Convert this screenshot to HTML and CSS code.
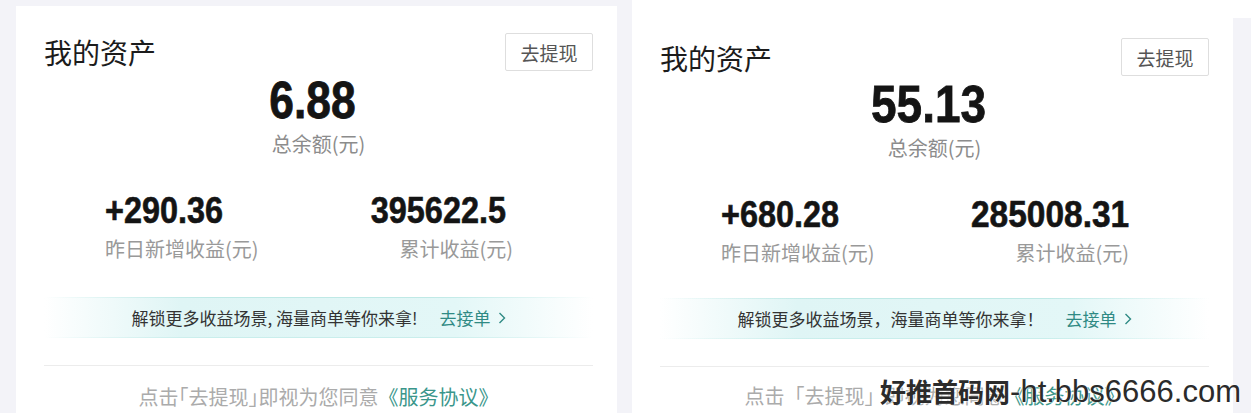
FILE: index.html
```html
<!DOCTYPE html>
<html lang="zh-CN">
<head>
    <meta charset="UTF-8">
    <meta name="viewport" content="width=device-width, initial-scale=1.0">
    <title>我的资产</title>
    <link rel="stylesheet" href="styles.css">
</head>
<body>

    <div class="page">
        <!-- Left screenshot -->
        <section class="shot shot-left">
            <div class="card">
                <div class="card-head">
                    <h1 class="title">我的资产</h1>
                    <button class="withdraw">去提现</button>
                </div>

                <div class="balance">
                    <div class="balance-num">6.88</div>
                    <div class="balance-label">总余额(元)</div>
                </div>

                <div class="stats">
                    <div class="stat">
                        <div class="stat-num">+290.36</div>
                        <div class="stat-label">昨日新增收益(元)</div>
                    </div>
                    <div class="stat stat-end">
                        <div class="stat-num">395622.5</div>
                        <div class="stat-label">累计收益(元)</div>
                    </div>
                </div>

                <div class="promo">
                    <span class="promo-text">解锁更多收益场景, 海量商单等你来拿!</span>
                    <a class="promo-link" href="#">去接单
                        <svg width="8" height="12" viewBox="0 0 8 12"><polyline points="1.5,1 6.5,6 1.5,11" fill="none" stroke="currentColor" stroke-width="1.4"/></svg>
                    </a>
                </div>

                <div class="divider"></div>

                <p class="agree">点击｢去提现｣即视为您同意<a href="#">《服务协议》</a></p>
            </div>
        </section>

        <!-- Right screenshot -->
        <section class="shot shot-right">
            <div class="card">
                <div class="card-head">
                    <h1 class="title">我的资产</h1>
                    <button class="withdraw">去提现</button>
                </div>

                <div class="balance">
                    <div class="balance-num">55.13</div>
                    <div class="balance-label">总余额(元)</div>
                </div>

                <div class="stats">
                    <div class="stat">
                        <div class="stat-num">+680.28</div>
                        <div class="stat-label">昨日新增收益(元)</div>
                    </div>
                    <div class="stat stat-end">
                        <div class="stat-num">285008.31</div>
                        <div class="stat-label">累计收益(元)</div>
                    </div>
                </div>

                <div class="promo">
                    <span class="promo-text">解锁更多收益场景，海量商单等你来拿！</span>
                    <a class="promo-link" href="#">去接单
                        <svg width="8" height="12" viewBox="0 0 8 12"><polyline points="1.5,1 6.5,6 1.5,11" fill="none" stroke="currentColor" stroke-width="1.4"/></svg>
                    </a>
                </div>

                <div class="divider"></div>

                <p class="agree">点击「去提现」即视为您同意<a href="#">《服务协议》</a></p>
            </div>
        </section>

        <div class="watermark"><span class="wm-cjk">好推首码网</span>-ht.bbs6666.com</div>
    </div>

</body>
</html>
```

FILE: styles.css
```css
body {
    margin: 0;
    background-color: #f3f3f8;
    font-family: "Noto Sans CJK SC", "Noto Sans", sans-serif;
}

.page {
    position: relative;
    display: flex;
    width: 1251px;
    height: 413px;
    overflow: hidden;
}

.shot {
    display: flex;
    box-sizing: border-box;
}

.shot-left {
    width: 632px;
    padding: 6px 15px 0 16px;
}

.shot-right {
    width: 619px;
    padding: 18px 18px 0 0;
    background: linear-gradient(#ffffff 18px, #f3f3f8 18px);
}

.card {
    flex: 1;
    background-color: #ffffff;
    padding: 27px 24px 0 28px;
}

.shot-right .card {
    padding-top: 20px;
}

/* Header */
.card-head {
    display: flex;
    justify-content: space-between;
    align-items: center;
    height: 38px;
}

.title {
    margin: 0;
    font-size: 28px;
    font-weight: 400;
    color: #1c1c1c;
    line-height: 38px;
}

.shot-right .title {
    margin-top: 2px;
}

.withdraw {
    width: 88px;
    height: 38px;
    padding: 0;
    border: 1px solid #dedede;
    border-radius: 2px;
    background-color: #ffffff;
    font-family: inherit;
    font-size: 19px;
    color: #555555;
}

/* Balance */
.balance {
    display: flex;
    flex-direction: column;
    align-items: center;
}

.balance-num {
    margin-top: 5px;
    padding-right: 14px;
    font-family: "Liberation Sans", sans-serif;
    font-weight: 700;
    font-size: 51px;
    line-height: 50px;
    color: #141414;
    -webkit-text-stroke: 0.8px #141414;
    transform: scaleX(0.87);
}

.shot-right .balance-num {
    margin-top: 4px;
    transform: scaleX(0.9);
}

.balance-label {
    margin-top: 6px;
    font-size: 20px;
    line-height: 24px;
    color: #8c8c8c;
}

/* Stats */
.stats {
    display: flex;
    justify-content: space-between;
    margin-top: 37px;
    padding: 0 80px 0 61px;
}

.stat-end {
    text-align: right;
}

.stat-num {
    font-family: "Liberation Sans", sans-serif;
    font-weight: 700;
    font-size: 36px;
    line-height: 36px;
    color: #141414;
    -webkit-text-stroke: 0.6px #141414;
    transform: scaleX(0.9);
    transform-origin: left center;
}

.stat-end .stat-num {
    padding-right: 8px;
    transform-origin: right center;
}

.shot-right .stat-end .stat-num {
    padding-right: 0;
    transform: scaleX(0.93);
}

.stat-label {
    margin-top: 8px;
    font-size: 20px;
    line-height: 24px;
    color: #999999;
}

/* Promo banner */
.promo {
    display: flex;
    justify-content: center;
    align-items: center;
    height: 41px;
    margin-top: 36px;
    background:
        linear-gradient(90deg, rgba(200, 236, 234, 0), #bfe9e6 30%, #bfe9e6 70%, rgba(200, 236, 234, 0)) top / 100% 1px no-repeat,
        linear-gradient(90deg, rgba(200, 236, 234, 0), #c9eeec 30%, #c9eeec 70%, rgba(200, 236, 234, 0)) bottom / 100% 1px no-repeat,
        linear-gradient(90deg, rgba(226, 247, 247, 0), #dff5f5 25%, #e3f7f7 75%, rgba(226, 247, 247, 0));
    font-size: 17px;
}

.shot-right .promo {
    margin-top: 33px;
}

.promo-text {
    color: #333333;
}

.promo-link {
    display: flex;
    align-items: center;
    gap: 7px;
    margin-left: 22px;
    color: #2f8a84;
    text-decoration: none;
}

/* Footer */
.divider {
    height: 1px;
    margin-top: 27px;
    background-color: #ececec;
}

.agree {
    margin: 19px 0 0;
    text-align: center;
    font-size: 20px;
    line-height: 24px;
    color: #ababab;
}

.shot-right .agree {
    margin-top: 17px;
}

.agree a {
    color: #3a968b;
    text-decoration: none;
}

/* Watermark over the right shot */
.watermark {
    position: absolute;
    right: 10px;
    bottom: 5px;
    font-family: "Liberation Sans", sans-serif;
    font-size: 31px;
    line-height: 32px;
    color: #2b2b2b;
    text-shadow: 0 0 2px #ffffff, 0 0 2px #ffffff;
}

.wm-cjk {
    font-family: "Noto Sans CJK SC", sans-serif;
    font-size: 26px;
    font-weight: 700;
}
```
